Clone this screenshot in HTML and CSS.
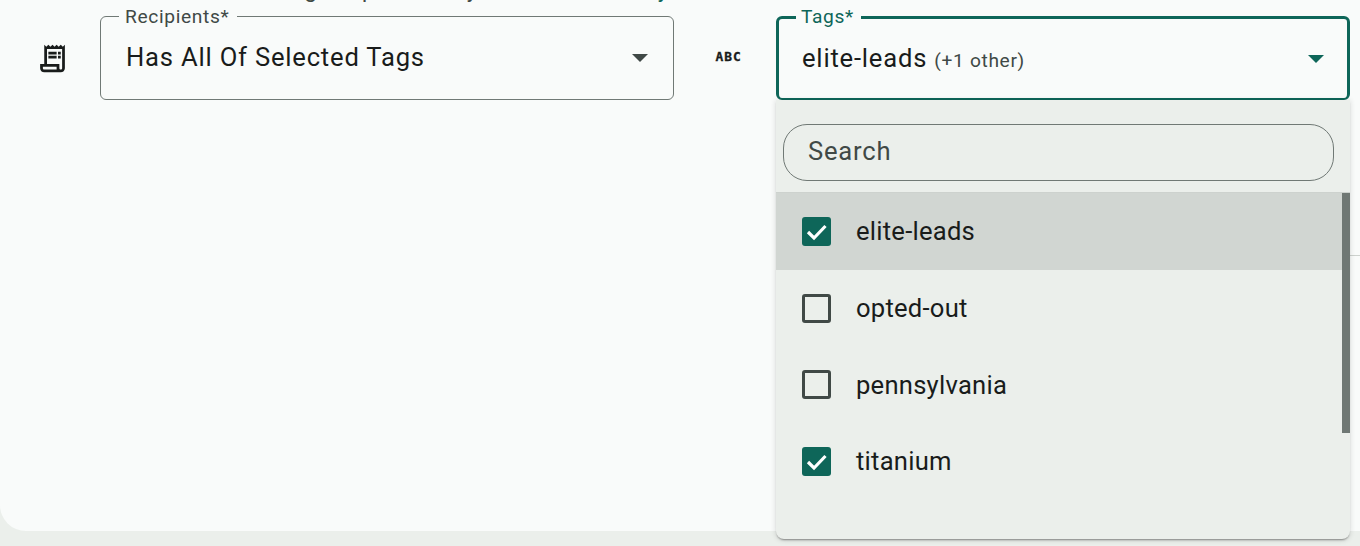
FILE: index.html
```html
<!DOCTYPE html>
<html lang="en">
<head>
<meta charset="utf-8">
<title>Recipients</title>
<link rel="stylesheet" href="styles.css">
</head>
<body>
<main class="panel">
  <p class="clipped">Reaching the patron only with all. <span class="link">Learn why</span></p>
  <div class="row">
    <div class="icon-cell">
      <svg class="receipt" viewBox="0 0 24 24" width="33" height="33" aria-hidden="true"><path d="M19.500 3.500 18 2l-1.500 1.500L15 2l-1.500 1.500L12 2l-1.500 1.500L9 2 7.500 3.500 6 2v14H3v3c0 1.660 1.340 3 3 3h12c1.660 0 3-1.340 3-3V2l-1.500 1.500zM15 20H6c-.55 0-1-.45-1-1v-1h10v2zm4-1c0 .55-.45 1-1 1s-1-.45-1-1v-3H8V5h11v14z"/><path d="M9 7h6v2H9zM16 7h2v2h-2zM9 10h6v2H9zM16 10h2v2h-2z"/></svg>
    </div>
    <div class="field">
      <span class="label">Recipients*</span>
      <span class="value">Has All Of Selected Tags</span>
      <span class="arrow"></span>
    </div>
    <div class="icon-cell abc-cell"><span class="abc">ABC</span></div>
    <div class="field field-focus">
      <span class="label">Tags*</span>
      <span class="value">elite-leads <span class="more">(+1 other)</span></span>
      <span class="arrow"></span>
      <div class="menu">
        <div class="search-wrap"><div class="search">Search</div></div>
        <ul class="list">
          <li class="item item-active"><span class="check check-on"><svg viewBox="0 0 29 29" width="29" height="29" aria-hidden="true"><path d="M6 15l6 6L23.500 9"/></svg></span>elite-leads</li>
          <li class="item"><span class="check"></span>opted-out</li>
          <li class="item"><span class="check"></span>pennsylvania</li>
          <li class="item"><span class="check check-on"><svg viewBox="0 0 29 29" width="29" height="29" aria-hidden="true"><path d="M6 15l6 6L23.500 9"/></svg></span>titanium</li>
        </ul>
        <span class="scrollbar"></span>
      </div>
    </div>
  </div>
  <span class="divider"></span>
</main>
</body>
</html>
```
FILE: styles.css
```css
* { box-sizing: border-box; }
html, body { margin: 0; height: 546px; overflow: hidden; background: #ebefeb; }
body { font-family: Roboto, "Liberation Sans", sans-serif; color: #191c1b; }
.panel {
  position: relative;
  height: 531px;
  background: #f9fbfa;
  border-bottom-left-radius: 26px;
}
.clipped {
  position: absolute;
  left: 222px;
  top: -25px;
  margin: 0;
  font-size: 22.400px;
  line-height: 28px;
  letter-spacing: .4px;
  white-space: nowrap;
  color: #404946;
}
.link { margin-left: -6px; color: #0e6659; }
.row {
  display: flex;
  padding-top: 16px;
  align-items: flex-start;
}
.icon-cell {
  flex: none;
  width: 100px;
  height: 84px;
  display: flex;
  align-items: center;
  justify-content: center;
  padding-left: 5px;
}
.abc-cell { width: 102px; padding-left: 7px; }
.receipt { fill: #191c1b; }
.abc {
  font-family: "DejaVu Sans Mono", monospace;
  font-weight: 700;
  font-size: 11.500px;
  letter-spacing: .8px;
  color: #191c1b;
  line-height: 1;
  transform: scaleX(1.120);
  -webkit-text-stroke: .3px #191c1b;
}
.field {
  position: relative;
  flex: none;
  width: 574px;
  height: 84px;
  border: 1px solid #707975;
  border-radius: 6px;
  padding: 24px 25px 0;
}
.field-focus {
  border: 3px solid #0e6659;
  border-bottom-width: 2px;
  padding: 23px 23px 0;
}
.label {
  position: absolute;
  left: 18px;
  top: -11px;
  padding: 0 8px 0 6px;
  background: #f9fbfa;
  font-size: 19.200px;
  line-height: 22px;
  letter-spacing: .64px;
  color: #404946;
}
.field-focus .label { left: 17px; top: -13px; padding: 0 7px 0 5px; color: #0e6659; }
.value {
  display: block;
  font-size: 25.600px;
  line-height: 32px;
  letter-spacing: .8px;
  color: #191c1b;
  white-space: nowrap;
}
.more { font-size: 19.200px; letter-spacing: .64px; color: #404946; }
.arrow {
  position: absolute;
  right: 25px;
  top: 37px;
  border-left: 8px solid transparent;
  border-right: 8px solid transparent;
  border-top: 8px solid #404946;
}
.field-focus .arrow { right: 23px; top: 36px; border-top-color: #0e6659; }
.menu {
  position: absolute;
  z-index: 1;
  left: -3px;
  top: 81px;
  width: 574px;
  height: 439px;
  background: #ebefeb;
  border-radius: 0 0 8px 8px;
  box-shadow: 0 2px 2px -1px rgba(0,0,0,.4), 0 1px 5px 1px rgba(0,0,0,.1);
}
.search-wrap { padding: 24px 16px 11px 7px; border-bottom: 1px solid #cdd2ce; }
.search {
  height: 57px;
  border: 1px solid #707975;
  border-radius: 24px;
  padding: 0 24px;
  font-size: 25.600px;
  line-height: 53px;
  letter-spacing: .8px;
  color: #404946;
}
.list { list-style: none; margin: 0; padding: 0 8px 0 0; }
.item {
  display: flex;
  align-items: center;
  height: 76.700px;
  padding-left: 26px;
  font-size: 25.600px;
  letter-spacing: .24px;
  color: #191c1b;
}
.item-active { background: #d1d6d2; }
.check {
  flex: none;
  width: 29px;
  height: 29px;
  margin-right: 25px;
  border: 3px solid #404946;
  border-radius: 3px;
}
.check-on {
  display: flex;
  align-items: center;
  justify-content: center;
  border: 0;
  background: #0e6659;
}
.check svg { flex: none; }
.check path { fill: none; stroke: #fff; stroke-width: 3.200; }
.scrollbar {
  position: absolute;
  right: 0;
  top: 93px;
  width: 8px;
  height: 240px;
  background: #6f7874;
}
.divider {
  position: absolute;
  right: 0;
  top: 255px;
  width: 20px;
  height: 1px;
  background: #cdd2ce;
}
```
